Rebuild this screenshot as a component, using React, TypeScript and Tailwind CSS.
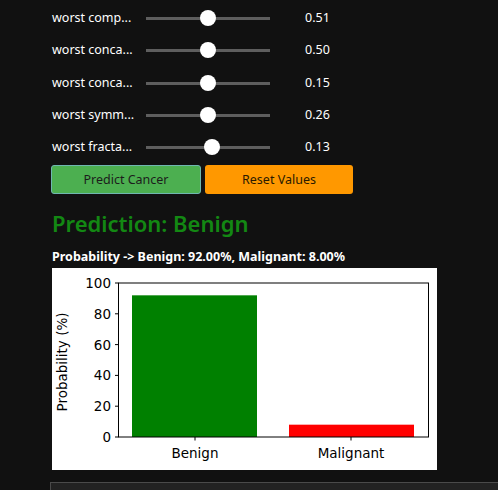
import React from 'react';

const sliders = [
  { label: 'worst comp...', value: '0.51', pos: 62 },
  { label: 'worst conca...', value: '0.50', pos: 62 },
  { label: 'worst conca...', value: '0.15', pos: 62 },
  { label: 'worst symm...', value: '0.26', pos: 62 },
  { label: 'worst fracta...', value: '0.13', pos: 66 },
];

function Slider({ pos }: { pos: number }) {
  return (
    <div className="relative h-4 w-[124px]">
      <div className="absolute left-0 right-0 top-[7px] h-[3px] bg-[#5e5e5e]" />
      <div
        className="absolute top-0 h-4 w-4 -translate-x-1/2 rounded-full bg-white"
        style={{ left: pos }}
      />
    </div>
  );
}

function Chart() {
  const y = (v: number) => 437 - 268 - (v / 100) * 154;
  const ticks = [0, 20, 40, 60, 80, 100];
  return (
    <svg width="385" height="202" viewBox="0 0 385 202" className="block">
      <rect x="0" y="0" width="385" height="202" fill="#ffffff" />
      <rect x="80" y={y(92)} width="125" height={y(0) - y(92)} fill="#008000" />
      <rect x="237" y={y(8)} width="125" height={y(0) - y(8)} fill="#ff0000" />
      <rect x="66.5" y={y(100)} width="310" height={y(0) - y(100)} fill="none" stroke="#000" strokeWidth="1" />
      {ticks.map((t) => (
        <g key={t}>
          <line x1="63" x2="66.5" y1={y(t)} y2={y(t)} stroke="#000" strokeWidth="1" />
          <text
            x="59"
            y={y(t) + 5}
            textAnchor="end"
            fontSize="13.5"
            fontFamily="'DejaVu Sans', sans-serif"
            fill="#000"
          >
            {t}
          </text>
        </g>
      ))}
      <line x1="143" x2="143" y1={y(0)} y2={y(0) + 3.5} stroke="#000" />
      <line x1="299" x2="299" y1={y(0)} y2={y(0) + 3.5} stroke="#000" />
      <text x="143" y="190" textAnchor="middle" fontSize="13.5" fontFamily="'DejaVu Sans', sans-serif" fill="#000">
        Benign
      </text>
      <text x="299" y="190" textAnchor="middle" fontSize="13.5" fontFamily="'DejaVu Sans', sans-serif" fill="#000">
        Malignant
      </text>
      <text
        x="0"
        y="0"
        transform="translate(15 94) rotate(-90)"
        textAnchor="middle"
        fontSize="13.5"
        fontFamily="'DejaVu Sans', sans-serif"
        fill="#000"
      >
        Probability (%)
      </text>
    </svg>
  );
}

export default function App() {
  return (
    <div className="h-[490px] w-[498px] overflow-hidden bg-[#111111] pl-[51px] font-['Noto_Sans',sans-serif] text-white">
      <div className="flex flex-col pt-[2px]">
        {sliders.map((s, i) => (
          <div key={i} className="flex h-[32.3px] items-center">
            <div className="w-[95px] pl-px text-[12.5px] leading-4">{s.label}</div>
            <Slider pos={s.pos} />
            <div className="pl-[35px] text-[12.5px] leading-4">{s.value}</div>
          </div>
        ))}
      </div>
      <div className="mt-[2px] flex gap-1">
        <button className="h-[29px] w-[150px] rounded-[3px] border border-[#6fb7b0] bg-[#4caf50] text-[12.5px] text-[#1c1c1c]">
          Predict Cancer
        </button>
        <button className="h-[29px] w-[148px] rounded-[3px] bg-[#ff9800] text-[12.5px] text-[#2a1a00]">
          Reset Values
        </button>
      </div>
      <div className="mt-[15px] pl-px text-[22px] font-semibold leading-7 text-[#138813]">
        Prediction: Benign
      </div>
      <div className="mt-[12px] pl-px text-[12.5px] font-bold leading-4">
        Probability -&gt; Benign: 92.00%, Malignant: 8.00%
      </div>
      <div className="mt-[3px] pl-px">
        <Chart />
      </div>
      <div className="ml-[-1px] mt-[12px] h-[20px] w-[460px] border border-[#4a4a4a] bg-[#222222]" />
    </div>
  );
}
